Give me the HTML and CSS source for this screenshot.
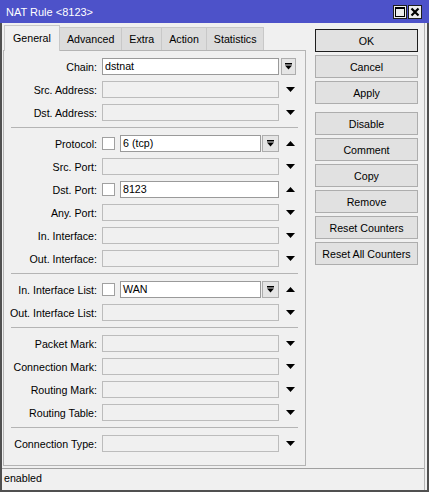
FILE: index.html
```html
<!DOCTYPE html>
<html>
<head>
<meta charset="utf-8">
<link rel="stylesheet" href="styles.css">
</head>
<body>
<div class="window">
  <div class="titlebar">
    <span class="title">NAT Rule &lt;8123&gt;</span>
    <div class="tb-buttons">
      <span class="tb-btn"><svg width="10" height="10" viewBox="0 0 10 10"><rect x="0.5" y="0.5" width="9" height="9" fill="none" stroke="#000" stroke-width="1"/><rect x="0" y="0" width="10" height="2" fill="#000"/></svg></span>
      <span class="tb-btn"><svg width="10" height="10" viewBox="0 0 10 10"><path d="M1.5 1.5 L8.5 8.5 M8.5 1.5 L1.5 8.5" stroke="#000" stroke-width="2.2"/></svg></span>
    </div>
  </div>
  <div class="frame">
    <div class="main">
      <div class="left">
        <div class="tabs">
          <div class="tab active">General</div>
          <div class="tab">Advanced</div>
          <div class="tab">Extra</div>
          <div class="tab">Action</div>
          <div class="tab">Statistics</div>
        </div>
        <div class="panel">
          <div class="row"><span class="lbl">Chain:</span><span class="field on">dstnat</span><span class="slot dds"><span class="dd"><svg width="9" height="9" viewBox="0 0 9 9"><rect x="1" y="1" width="7" height="1.5" fill="#000"/><path d="M1 3.5 H8 L4.5 7.5 Z" fill="#000"/></svg></span></span></div>
          <div class="row"><span class="lbl">Src. Address:</span><span class="field"></span><span class="slot"><svg width="9" height="5" viewBox="0 0 9 5"><path d="M0 0 H9 L4.5 5 Z" fill="#000"/></svg></span></div>
          <div class="row"><span class="lbl">Dst. Address:</span><span class="field"></span><span class="slot"><svg width="9" height="5" viewBox="0 0 9 5"><path d="M0 0 H9 L4.5 5 Z" fill="#000"/></svg></span></div>
          <div class="sep"></div>
          <div class="row"><span class="lbl">Protocol:</span><span class="cb"></span><span class="field on combo">6 (tcp)</span><span class="dd"><svg width="9" height="9" viewBox="0 0 9 9"><rect x="1" y="1" width="7" height="1.5" fill="#000"/><path d="M1 3.5 H8 L4.5 7.5 Z" fill="#000"/></svg></span><span class="slot"><svg width="9" height="5" viewBox="0 0 9 5"><path d="M0 5 H9 L4.5 0 Z" fill="#000"/></svg></span></div>
          <div class="row"><span class="lbl">Src. Port:</span><span class="field"></span><span class="slot"><svg width="9" height="5" viewBox="0 0 9 5"><path d="M0 0 H9 L4.5 5 Z" fill="#000"/></svg></span></div>
          <div class="row"><span class="lbl">Dst. Port:</span><span class="cb"></span><span class="field on short">8123</span><span class="slot"><svg width="9" height="5" viewBox="0 0 9 5"><path d="M0 5 H9 L4.5 0 Z" fill="#000"/></svg></span></div>
          <div class="row"><span class="lbl">Any. Port:</span><span class="field"></span><span class="slot"><svg width="9" height="5" viewBox="0 0 9 5"><path d="M0 0 H9 L4.5 5 Z" fill="#000"/></svg></span></div>
          <div class="row"><span class="lbl">In. Interface:</span><span class="field"></span><span class="slot"><svg width="9" height="5" viewBox="0 0 9 5"><path d="M0 0 H9 L4.5 5 Z" fill="#000"/></svg></span></div>
          <div class="row"><span class="lbl">Out. Interface:</span><span class="field"></span><span class="slot"><svg width="9" height="5" viewBox="0 0 9 5"><path d="M0 0 H9 L4.5 5 Z" fill="#000"/></svg></span></div>
          <div class="sep"></div>
          <div class="row"><span class="lbl">In. Interface List:</span><span class="cb"></span><span class="field on combo">WAN</span><span class="dd"><svg width="9" height="9" viewBox="0 0 9 9"><rect x="1" y="1" width="7" height="1.5" fill="#000"/><path d="M1 3.5 H8 L4.5 7.5 Z" fill="#000"/></svg></span><span class="slot"><svg width="9" height="5" viewBox="0 0 9 5"><path d="M0 5 H9 L4.5 0 Z" fill="#000"/></svg></span></div>
          <div class="row"><span class="lbl">Out. Interface List:</span><span class="field"></span><span class="slot"><svg width="9" height="5" viewBox="0 0 9 5"><path d="M0 0 H9 L4.5 5 Z" fill="#000"/></svg></span></div>
          <div class="sep"></div>
          <div class="row"><span class="lbl">Packet Mark:</span><span class="field"></span><span class="slot"><svg width="9" height="5" viewBox="0 0 9 5"><path d="M0 0 H9 L4.5 5 Z" fill="#000"/></svg></span></div>
          <div class="row"><span class="lbl">Connection Mark:</span><span class="field"></span><span class="slot"><svg width="9" height="5" viewBox="0 0 9 5"><path d="M0 0 H9 L4.5 5 Z" fill="#000"/></svg></span></div>
          <div class="row"><span class="lbl">Routing Mark:</span><span class="field"></span><span class="slot"><svg width="9" height="5" viewBox="0 0 9 5"><path d="M0 0 H9 L4.5 5 Z" fill="#000"/></svg></span></div>
          <div class="row"><span class="lbl">Routing Table:</span><span class="field"></span><span class="slot"><svg width="9" height="5" viewBox="0 0 9 5"><path d="M0 0 H9 L4.5 5 Z" fill="#000"/></svg></span></div>
          <div class="sep"></div>
          <div class="row"><span class="lbl">Connection Type:</span><span class="field"></span><span class="slot"><svg width="9" height="5" viewBox="0 0 9 5"><path d="M0 0 H9 L4.5 5 Z" fill="#000"/></svg></span></div>
        </div>
      </div>
      <div class="buttons">
        <div class="btn default">OK</div>
        <div class="btn">Cancel</div>
        <div class="btn">Apply</div>
        <div class="btn gapped">Disable</div>
        <div class="btn">Comment</div>
        <div class="btn">Copy</div>
        <div class="btn">Remove</div>
        <div class="btn">Reset Counters</div>
        <div class="btn">Reset All Counters</div>
      </div>
    </div>
    <div class="status">enabled</div>
  </div>
</div>
</body>
</html>
```

FILE: styles.css
```css
* { box-sizing: border-box; }
body {
  margin: 0;
  font-family: "Liberation Sans", Arial, sans-serif;
  font-size: 10.667px;
  color: #000;
  background: #f0f0f0;
}
.window {
  width: 429px;
  height: 492px;
  background: #f0f0f0;
  display: flex;
  flex-direction: column;
  overflow: hidden;
}
.titlebar {
  height: 23px;
  flex: none;
  background: #4d52c9;
  color: #fff;
  display: flex;
  align-items: center;
  justify-content: space-between;
  padding: 0 7px 0 6px;
  font-size: 11px;
}
.tb-buttons { display: flex; gap: 1px; }
.tb-btn {
  width: 14px;
  height: 14px;
  background: #ececec;
  border: 1px solid #1e1e1e;
  display: flex;
  align-items: center;
  justify-content: center;
}
.tb-btn svg { display: block; }
.frame {
  flex: 1;
  border: 2px solid #505050;
  border-top: 0;
  display: flex;
  flex-direction: column;
  box-shadow: inset -2px 0 0 #f0f0f0, inset -3px 0 0 #b4b4b4;
}
.main {
  display: flex;
  height: 443px;
  padding-left: 1px;
}
.left {
  width: 303px;
  display: flex;
  flex-direction: column;
}
.tabs {
  height: 27px;
  display: flex;
  align-items: flex-end;
  padding-left: 1px;
}
.tab {
  height: 23px;
  padding: 0 7px;
  display: flex;
  align-items: center;
  background: #dcdcdc;
  border: 1px solid #c8c8c8;
  border-bottom: 0;
  margin-left: -1px;
  white-space: nowrap;
}
.tab.active {
  height: 26px;
  margin-bottom: -1px;
  margin-left: 0;
  padding: 0 8px 1px;
  background: #f0f0f0;
  position: relative;
  z-index: 1;
}
.panel {
  height: 416px;
  border: 1px solid #b4b4b4;
  padding-top: 4px;
}
.row {
  height: 23px;
  display: flex;
  align-items: center;
}
.lbl {
  width: 93px;
  text-align: right;
  margin-right: 5px;
  white-space: nowrap;
}
.field {
  height: 17px;
  width: 177px;
  border: 1px solid #bcbcbc;
  padding-left: 2px;
  line-height: 15px;
}
.field.on { background: #fff; border-color: #9a9a9a; }
.field.combo { width: 141px; }
.field.short { width: 159px; }
.cb {
  width: 13px;
  height: 13px;
  border: 1px solid #a0a0a0;
  background: #fff;
  margin-right: 5px;
}
.dd {
  width: 17px;
  height: 17px;
  margin-left: 1px;
  border: 1px solid #adadad;
  background: #e5e5e5;
  display: flex;
  align-items: center;
  justify-content: center;
}
.dd svg { display: block; }
.slot {
  width: 17px;
  height: 17px;
  margin-left: 1px;
  padding-left: 6px;
  display: flex;
  align-items: center;
}
.slot svg { display: block; }
.slot.dds { padding-left: 1px; }
.slot.dds .dd { width: 15px; margin-left: 0; }
.sep {
  height: 1px;
  background: #b4b4b4;
  margin: 3px 7px 4px 7px;
}
.buttons {
  width: 103px;
  margin-left: 9px;
  padding-top: 6px;
  display: flex;
  flex-direction: column;
  gap: 3px;
}
.btn {
  height: 23px;
  border: 1px solid #adadad;
  background: #e1e1e1;
  display: flex;
  align-items: center;
  justify-content: center;
  white-space: nowrap;
}
.btn.default { border-color: #1e1e1e; }
.btn.gapped { margin-top: 5px; }
.status {
  margin-top: 2px;
  margin-right: 3px;
  height: 22px;
  border-top: 1px solid #a0a0a0;
  padding: 0 0 4px 2px;
  display: flex;
  align-items: center;
}
```
